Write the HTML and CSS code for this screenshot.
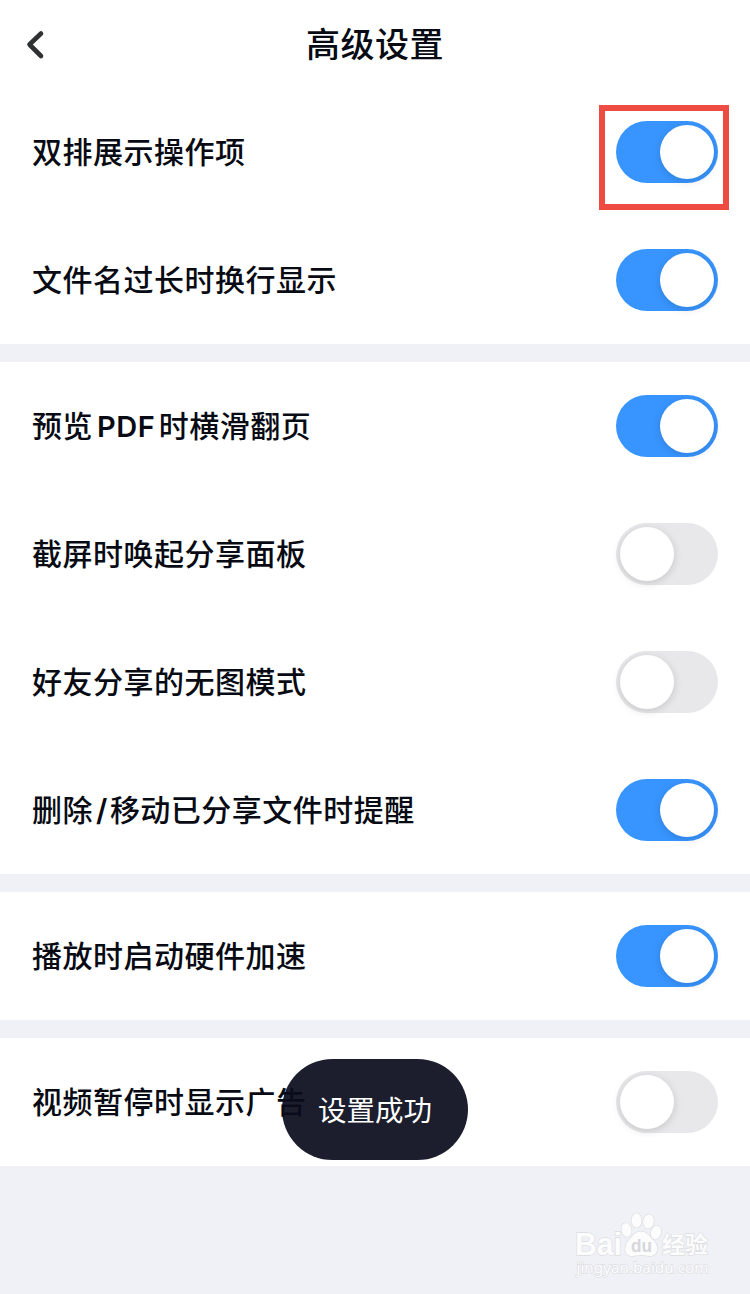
FILE: index.html
```html
<!DOCTYPE html>
<html lang="zh">
    <head>
        <meta charset="UTF-8">
        <title>高级设置</title>
        <link rel="stylesheet" href="styles.css">
    </head>

    <body>
        <div class="header">
            <svg class="back" width="24" height="34" viewBox="0 0 24 34">
                <path d="M19 6.500 L7.500 17.500 L19 29" />
            </svg>
            <h1 class="title">高级设置</h1>
        </div>

        <div class="group">
            <div class="row">
                <span class="label">双排展示操作项</span>
                <div class="switch on"><i class="knob"></i><b class="mark"></b></div>
            </div>
            <div class="row">
                <span class="label">文件名过长时换行显示</span>
                <div class="switch on"><i class="knob"></i></div>
            </div>
        </div>

        <div class="group">
            <div class="row">
                <span class="label">预览<span class="en pdf">PDF</span>时横滑翻页</span>
                <div class="switch on"><i class="knob"></i></div>
            </div>
            <div class="row">
                <span class="label">截屏时唤起分享面板</span>
                <div class="switch"><i class="knob"></i></div>
            </div>
            <div class="row">
                <span class="label">好友分享的无图模式</span>
                <div class="switch"><i class="knob"></i></div>
            </div>
            <div class="row">
                <span class="label">删除<span class="en slash">/</span>移动已分享文件时提醒</span>
                <div class="switch on"><i class="knob"></i></div>
            </div>
        </div>

        <div class="group">
            <div class="row">
                <span class="label">播放时启动硬件加速</span>
                <div class="switch on"><i class="knob"></i></div>
            </div>
        </div>

        <div class="group">
            <div class="row">
                <span class="label">视频暂停时显示广告</span>
                <div class="switch"><i class="knob"></i></div>
            </div>
        </div>

        <div class="toast">设置成功</div>

        <!-- 水印 -->
        <svg class="watermark" width="150" height="70" viewBox="0 0 150 70">
            <text class="wm-text" x="4" y="45" font-size="31" textLength="47" lengthAdjust="spacingAndGlyphs">Bai</text>
            <g class="paw">
                <ellipse cx="55.500" cy="20" rx="5" ry="7" transform="rotate(-12 55.5 20)" />
                <ellipse cx="65.500" cy="10.500" rx="5" ry="7.200" />
                <ellipse cx="77.500" cy="11.500" rx="5.300" ry="7" transform="rotate(8 77.5 11.5)" />
                <ellipse cx="85" cy="22.500" rx="5" ry="7" transform="rotate(15 85 22.5)" />
                <path d="M70 21.500 C76 21.500 78 26 82 30 C88 35 88 46 79 46 C75 46 73 45 70 45 C67 45 65 46 61 46 C52 46 53 35 58 30 C62 26 64 21.500 70 21.500 Z" />
            </g>
            <text class="wm-du" x="60" y="42" font-size="19" textLength="21" lengthAdjust="spacingAndGlyphs">du</text>
            <text class="wm-text wm-cn" x="91" y="43" font-size="23" textLength="46">经验</text>
            <text class="wm-url" x="5.500" y="62.500" font-size="15" textLength="132" lengthAdjust="spacingAndGlyphs">jingyan.baidu.com</text>
        </svg>
    </body>
</html>
```
FILE: styles.css
```css
body{
    position: relative;
    margin: 0;
    height: 1294px;
    overflow: hidden;
    background-color: #f0f1f6;
    color: #080b14;
    font-family: "Noto Sans CJK SC", sans-serif;
}

.header{
    height: 88px;
    display: grid;
    grid-template-columns: 48px 1fr 48px;
    align-items: center;
    background-color: #fff;
}

.back{
    margin-left: 22px;
    fill: none;
    stroke: #2f3031;
    stroke-width: 4.6;
    stroke-linecap: round;
    stroke-linejoin: round;
}

.title{
    margin: 0;
    text-align: center;
    font-size: 34px;
    font-weight: 500;
    line-height: 86px;
    height: 88px;
    letter-spacing: .5px;
}

.group{
    margin-bottom: 18px;
    background-color: #fff;
}

.row{
    height: 128px;
    padding: 0 32px;
    display: flex;
    justify-content: space-between;
    align-items: center;
}

.label{
    padding-bottom: 4px;
    font-size: 30px;
    font-weight: 500;
    line-height: 44px;
    letter-spacing: .5px;
    white-space: nowrap;
}

.en{
    font-family: Inter, "Liberation Sans", sans-serif;
    font-weight: 600;
    line-height: 1;
}

.pdf{
    margin: 0 3.5px 0 4px;
    font-size: 29px;
}

.slash{
    margin: 0 2px 0 3px;
}

/* 开关 */
.switch{
    position: relative;
    box-sizing: border-box;
    width: 102px;
    height: 62px;
    padding: 4px;
    display: flex;
    border-radius: 31px;
    background-color: #e8e8ea;
}

.knob{
    width: 54px;
    height: 54px;
    border-radius: 50%;
    background-color: #fff;
    box-shadow: 0 2px 8px rgba(0,0,0,.15);
}

.on{
    justify-content: flex-end;
    background-color: #3895ff;
}

/* 红框标注 */
.mark{
    position: absolute;
    left: -17px;
    top: -16px;
    box-sizing: border-box;
    width: 130px;
    height: 105px;
    border: 6px solid #ee4c42;
}

/* 提示 */
.toast{
    position: absolute;
    left: 282px;
    top: 1059px;
    width: 186px;
    height: 101px;
    border-radius: 51px;
    background-color: rgba(11,13,30,.93);
    color: #fff;
    font-size: 28.5px;
    line-height: 99px;
    text-align: center;
}

.watermark{
    position: absolute;
    left: 571px;
    top: 1210px;
}

.wm-text, .paw, .wm-url{
    fill: #fcfcfd;
    stroke: #dcdde1;
    stroke-width: 1.3;
    paint-order: stroke;
}

.wm-text{
    font-family: "Liberation Sans", sans-serif;
    font-weight: 700;
}

.wm-cn{
    font-family: "Noto Sans CJK SC", sans-serif;
}

.wm-du{
    fill: #d6d7dc;
    font-family: "Liberation Sans", sans-serif;
    font-weight: 700;
}

.wm-url{
    font-family: "Noto Sans", sans-serif;
}
```
